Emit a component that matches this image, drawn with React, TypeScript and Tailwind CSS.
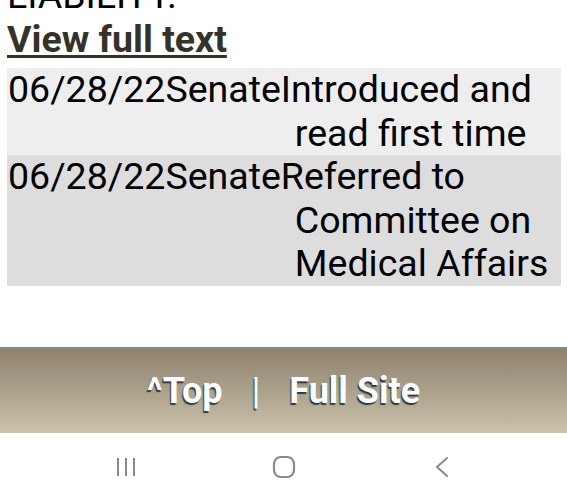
import React from "react";

const rows = [
  { date: "06/28/22", house: "Senate", action: "Introduced and read first time", bg: "bg-[#eeeeee]" },
  { date: "06/28/22", house: "Senate", action: "Referred to Committee on Medical Affairs", bg: "bg-[#dddddd]" },
];

export default function App() {
  return (
    <div className="w-[567px] h-[500px] overflow-hidden bg-white flex flex-col font-['Roboto',sans-serif]">
      <div className="h-[347px] shrink-0 overflow-hidden pl-[7px] pr-[6px] text-[37.5px] leading-[43.5px] text-black">
        <div className="mt-[-26px]">LIABILITY.</div>
        <div>
          <span className="font-bold text-[#33332a] underline decoration-[3px] underline-offset-[3px]">View full text</span>
        </div>
        <div className="mt-[7px] flex flex-col">
          {rows.map((r, i) => (
            <div key={i} className={`flex ${r.bg}`}>
              <div className="pl-px whitespace-nowrap">{r.date}</div>
              <div className="whitespace-nowrap">{r.house}</div>
              <div className="flex-1 pl-[14px] -indent-[14px]">{r.action}</div>
            </div>
          ))}
        </div>
      </div>
      <div className="border-t-2 border-[#7e8d93] h-[86px] shrink-0 bg-gradient-to-b from-[#8e826d] to-[#cbc3ac] flex items-center justify-center gap-[29px] text-white font-bold text-[36px] leading-none [text-shadow:-1px_2px_1px_#2c3b4a]">
        <span>^Top</span>
        <span className="font-normal">|</span>
        <span>Full Site</span>
      </div>
      <div className="flex-1 bg-white flex items-center justify-center gap-[118px]">
        <div className="w-[40px] flex justify-center">
          <svg width="20" height="20" viewBox="0 0 20 20">
            <line x1="2" y1="1" x2="2" y2="19" stroke="#8a8a8a" strokeWidth="2" />
            <line x1="10" y1="1" x2="10" y2="19" stroke="#8a8a8a" strokeWidth="2" />
            <line x1="18" y1="1" x2="18" y2="19" stroke="#8a8a8a" strokeWidth="2" />
          </svg>
        </div>
        <div className="w-[40px] flex justify-center">
          <svg width="24" height="24" viewBox="0 0 24 24">
            <rect x="2" y="2" width="20" height="20" rx="7" fill="none" stroke="#8a8a8a" strokeWidth="2.2" />
          </svg>
        </div>
        <div className="w-[40px] flex justify-center">
          <svg width="16" height="22" viewBox="0 0 16 22">
            <polyline points="13,2 3,11 13,20" fill="none" stroke="#8a8a8a" strokeWidth="2" strokeLinejoin="round" strokeLinecap="round" />
          </svg>
        </div>
      </div>
    </div>
  );
}
